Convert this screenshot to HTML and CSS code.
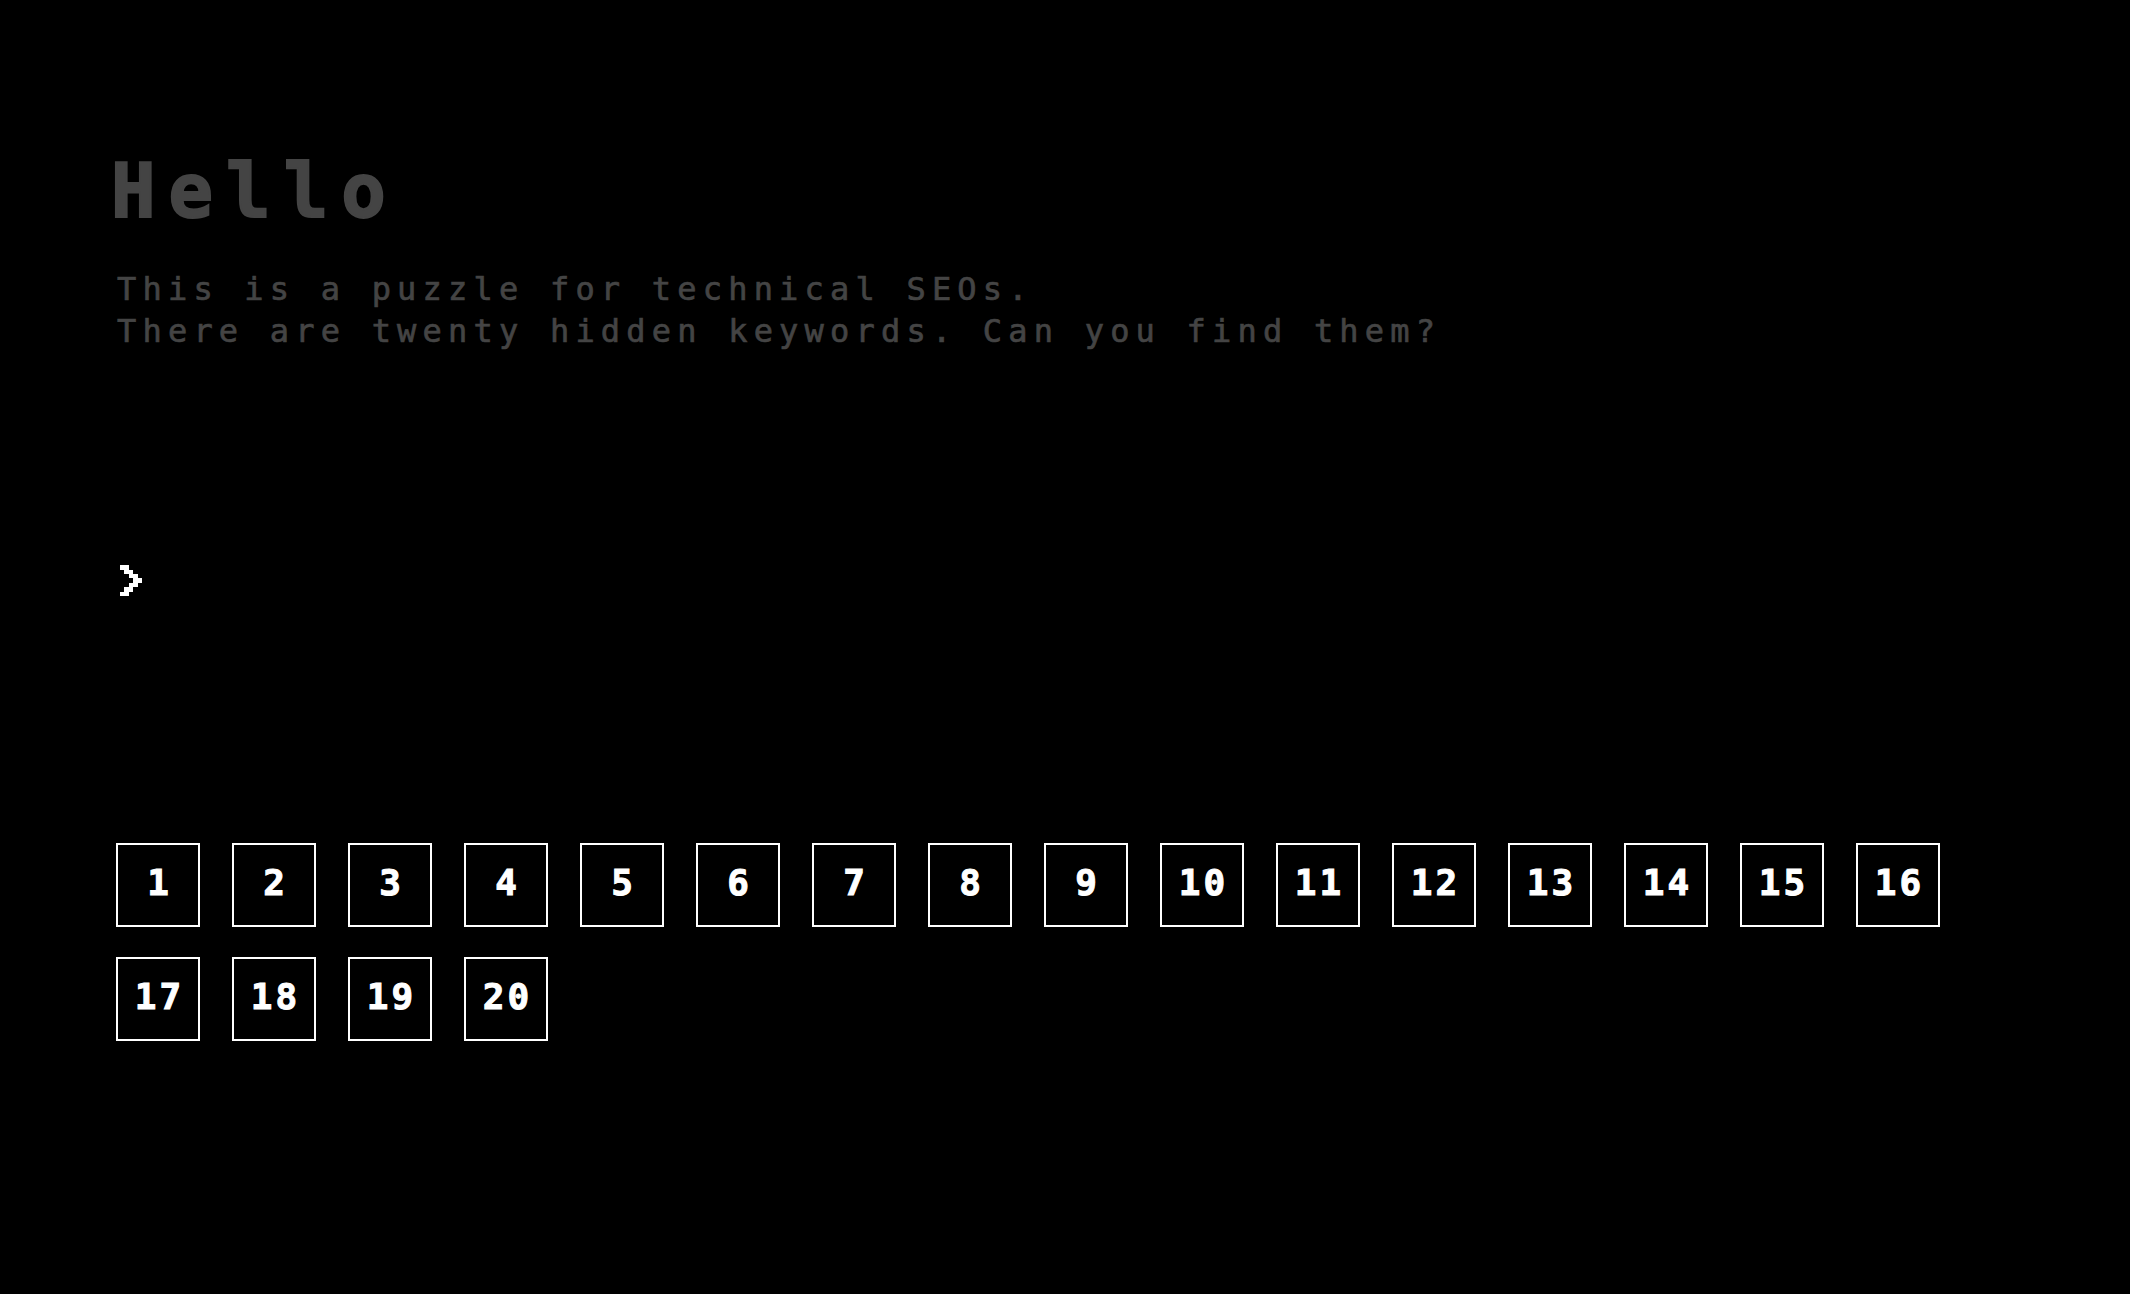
FILE: index.html
```html
<!DOCTYPE html>
<html lang="en">
<head>
<meta charset="utf-8">
<title>Hello</title>
<link rel="stylesheet" href="styles.css">
</head>
<body>
<main class="page">
  <h1 class="title">Hello</h1>
  <p class="intro">This is a puzzle for technical SEOs.<br>There are twenty hidden keywords. Can you find them?</p>
  <div class="prompt">
    <svg class="chevron" viewBox="0 0 5 7" width="22" height="31" shape-rendering="crispEdges">
      <rect x="0" y="0" width="2" height="1" fill="#fff"/>
      <rect x="1" y="1" width="2" height="1" fill="#fff"/>
      <rect x="2" y="2" width="2" height="1" fill="#fff"/>
      <rect x="3" y="3" width="2" height="1" fill="#fff"/>
      <rect x="2" y="4" width="2" height="1" fill="#fff"/>
      <rect x="1" y="5" width="2" height="1" fill="#fff"/>
      <rect x="0" y="6" width="2" height="1" fill="#fff"/>
    </svg>
  </div>
  <ul class="grid">
    <li class="cell">1</li>
    <li class="cell">2</li>
    <li class="cell">3</li>
    <li class="cell">4</li>
    <li class="cell">5</li>
    <li class="cell">6</li>
    <li class="cell">7</li>
    <li class="cell">8</li>
    <li class="cell">9</li>
    <li class="cell">10</li>
    <li class="cell">11</li>
    <li class="cell">12</li>
    <li class="cell">13</li>
    <li class="cell">14</li>
    <li class="cell">15</li>
    <li class="cell">16</li>
    <li class="cell">17</li>
    <li class="cell">18</li>
    <li class="cell">19</li>
    <li class="cell">20</li>
  </ul>
</main>
</body>
</html>
```

FILE: styles.css
```css
html, body {
  margin: 0;
  padding: 0;
  background: #000;
}

body {
  font-family: "DejaVu Sans Mono", "Liberation Mono", monospace;
  color: #444;
}

.page {
  padding: 154px 0 0 116px;
  width: 1900px;
}

.title {
  margin: 0 0 0 -5px;
  font-size: 74px;
  line-height: 74px;
  font-weight: bold;
  letter-spacing: 13px;
  color: #444;
  -webkit-text-stroke: 2px #444;
}

.intro {
  margin: 40px 0 0 1px;
  font-size: 32px;
  line-height: 42px;
  font-weight: normal;
  letter-spacing: 6.2px;
  color: #444;
  -webkit-text-stroke: 0.7px #444;
}

.prompt {
  margin: 213px 0 0 4px;
  height: 31px;
}

.chevron {
  display: block;
}

.grid {
  list-style: none;
  margin: 247px 0 0 0;
  padding: 0;
  display: flex;
  flex-wrap: wrap;
  gap: 30px 32px;
  width: 1850px;
}

.cell {
  box-sizing: border-box;
  width: 84px;
  height: 84px;
  border: 2px solid #fff;
  display: flex;
  align-items: center;
  justify-content: center;
  color: #fff;
  font-size: 36px;
  line-height: 36px;
  font-weight: bold;
  letter-spacing: 3px;
  padding: 0 0 5px 3px;
  -webkit-text-stroke: 1px #fff;
}
```
